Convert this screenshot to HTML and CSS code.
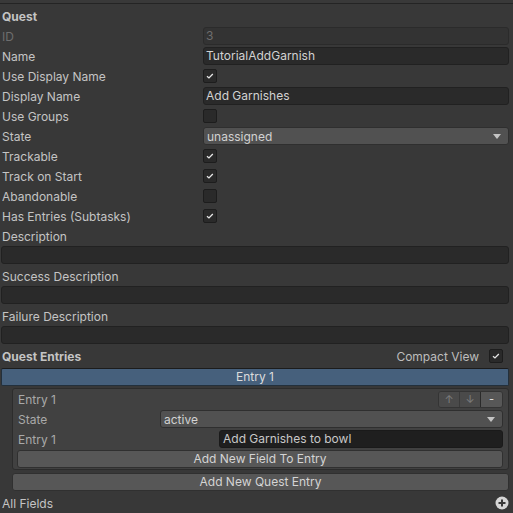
FILE: index.html
```html
<!DOCTYPE html>
<html>
<head>
<meta charset="utf-8">
<link rel="stylesheet" href="styles.css">
</head>
<body>
<div class="topbar"></div>
<div class="panel">
  <div class="row"><span class="label bold">Quest</span></div>
  <div class="row"><span class="label disabled">ID</span><div class="field disabled-field">3</div></div>
  <div class="row"><span class="label">Name</span><div class="field">TutorialAddGarnish</div></div>
  <div class="row"><span class="label">Use Display Name</span><span class="check on"><svg viewBox="0 0 14 14"><path d="M3.5 7.2 L5.8 9.3 L10.3 4.6"/></svg></span></div>
  <div class="row"><span class="label">Display Name</span><div class="field">Add Garnishes</div></div>
  <div class="row"><span class="label">Use Groups</span><span class="check"></span></div>
  <div class="row"><span class="label">State</span><div class="dropdown"><span>unassigned</span><span class="tri"></span></div></div>
  <div class="row"><span class="label">Trackable</span><span class="check on"><svg viewBox="0 0 14 14"><path d="M3.5 7.2 L5.8 9.3 L10.3 4.6"/></svg></span></div>
  <div class="row"><span class="label">Track on Start</span><span class="check on"><svg viewBox="0 0 14 14"><path d="M3.5 7.2 L5.8 9.3 L10.3 4.6"/></svg></span></div>
  <div class="row"><span class="label">Abandonable</span><span class="check"></span></div>
  <div class="row"><span class="label">Has Entries (Subtasks)</span><span class="check on"><svg viewBox="0 0 14 14"><path d="M3.5 7.2 L5.8 9.3 L10.3 4.6"/></svg></span></div>
  <div class="row"><span class="label">Description</span></div>
  <div class="field wide"></div>
  <div class="row"><span class="label">Success Description</span></div>
  <div class="field wide"></div>
  <div class="row"><span class="label">Failure Description</span></div>
  <div class="field wide"></div>
  <div class="row between"><span class="label bold">Quest Entries</span><span class="compact">Compact View<span class="check on"><svg viewBox="0 0 14 14"><path d="M3.5 7.2 L5.8 9.3 L10.3 4.6"/></svg></span></span></div>
  <div class="entrybar">Entry 1</div>
  <div class="entrybox">
    <div class="irow"><span class="ilabel">Entry 1</span>
      <div class="btngroup"><span class="gbtn dim">↑</span><span class="gbtn dim">↓</span><span class="gbtn">-</span></div>
    </div>
    <div class="irow"><span class="ilabel state">State</span><div class="dropdown"><span>active</span><span class="tri"></span></div></div>
    <div class="irow"><span class="ilabel entry">Entry 1</span><div class="field darkfield">Add Garnishes to bowl</div></div>
    <div class="btn inner">Add New Field To Entry</div>
  </div>
  <div class="btn outer">Add New Quest Entry</div>
  <div class="row between"><span class="label">All Fields</span>
    <svg class="plus" viewBox="0 0 14 14"><circle cx="7" cy="7" r="6.5"/><path d="M7 3.5 V10.5 M3.5 7 H10.5"/></svg>
  </div>
</div>
</body>
</html>
```
FILE: styles.css
```css
html, body {
  margin: 0;
  padding: 0;
  background: #383838;
  width: 513px;
  height: 513px;
  overflow: hidden;
}
body {
  font-family: Inter, "Noto Sans", sans-serif;
  font-size: 12px;
  color: #c4c4c4;
}
.topbar {
  height: 3px;
  border-bottom: 1px solid #242424;
  background: #393939;
}
.panel {
  padding-top: 2px;
}
.row {
  display: flex;
  align-items: center;
  height: 20px;
}
.row.between {
  justify-content: space-between;
}
.label {
  width: 201px;
  padding-left: 2px;
  flex: none;
  white-space: nowrap;
}
.bold {
  font-weight: 700;
}
.disabled {
  color: #6e6e6e;
}
.field {
  box-sizing: border-box;
  height: 18px;
  flex: 1;
  margin-right: 4px;
  background: #2a2a2a;
  border: 1px solid #212121;
  border-radius: 3px;
  padding-left: 2px;
  line-height: 16px;
  color: #d2d2d2;
  white-space: nowrap;
}
.disabled-field {
  background: #333333;
  border-color: #2b2b2b;
  color: #6e6e6e;
}
.field.wide {
  margin: 0 4px 2px 1px;
}
.check {
  box-sizing: border-box;
  width: 14px;
  height: 14px;
  background: #2a2a2a;
  border: 1px solid #1d1d1d;
  border-radius: 2px;
  display: inline-flex;
  flex: none;
}
.check svg {
  width: 12px;
  height: 12px;
}
.check svg path {
  fill: none;
  stroke: #e6e6e6;
  stroke-width: 1.5;
}
.dropdown {
  box-sizing: border-box;
  height: 18px;
  flex: 1;
  margin-right: 4px;
  background: #515151;
  border: 1px solid #2f2f2f;
  border-radius: 3px;
  padding: 0 7px 0 3px;
  display: flex;
  align-items: center;
  justify-content: space-between;
  color: #d2d2d2;
}
.tri {
  width: 0;
  height: 0;
  border-left: 4px solid transparent;
  border-right: 4px solid transparent;
  border-top: 5px solid #c4c4c4;
}
.compact {
  display: flex;
  align-items: center;
  gap: 10px;
  margin-right: 10px;
  color: #bdbdbd;
}
.entrybar {
  box-sizing: border-box;
  height: 18px;
  margin: 2px 4px 0 1px;
  background: #46607c;
  border: 1px solid #23303c;
  border-top-color: #1c1c1c;
  border-radius: 2px;
  text-align: center;
  line-height: 16px;
  color: #dcdcdc;
}
.entrybox {
  box-sizing: border-box;
  margin: 2px 4px 0 12px;
  height: 82px;
  background: #414141;
  border: 1px solid #2c2c2c;
  border-radius: 3px;
  padding: 0 5px 0 4px;
}
.irow {
  display: flex;
  align-items: center;
  height: 20px;
  justify-content: space-between;
}
.ilabel {
  padding-left: 1px;
  color: #a9a9a9;
  flex: none;
}
.ilabel.state {
  width: 142px;
}
.ilabel.entry {
  width: 201px;
}
.irow .dropdown, .irow .field {
  margin-right: 0;
}
.darkfield {
  background: #1f1f1f;
  border-color: #1a1a1a;
  color: #c8c8c8;
  padding-left: 3px;
}
.btngroup {
  display: flex;
  height: 17px;
  border: 1px solid #343434;
  border-radius: 3px;
  overflow: hidden;
  box-sizing: border-box;
}
.gbtn {
  width: 20px;
  background: #4a4a4a;
  border-left: 1px solid #3a3a3a;
  display: flex;
  align-items: center;
  justify-content: center;
  font-size: 11px;
  line-height: 1;
  color: #e0e0e0;
}
.gbtn:first-child {
  border-left: none;
}
.gbtn:last-child {
  width: 21px;
  background: #575757;
  border-left-color: #2a2a2a;
}
.gbtn.dim {
  color: #7e7e7e;
}
.btn {
  box-sizing: border-box;
  height: 18px;
  background: #575757;
  border: 1px solid #303030;
  border-radius: 3px;
  text-align: center;
  line-height: 16px;
  color: #d4d4d4;
}
.btn.inner {
  margin: 1px 0 0 0;
}
.btn.outer {
  margin: 3px 4px 2px 12px;
}
.plus {
  width: 14px;
  height: 14px;
  margin-right: 4px;
}
.plus circle {
  fill: #d6d6d6;
}
.plus path {
  stroke: #383838;
  stroke-width: 2;
}
```
